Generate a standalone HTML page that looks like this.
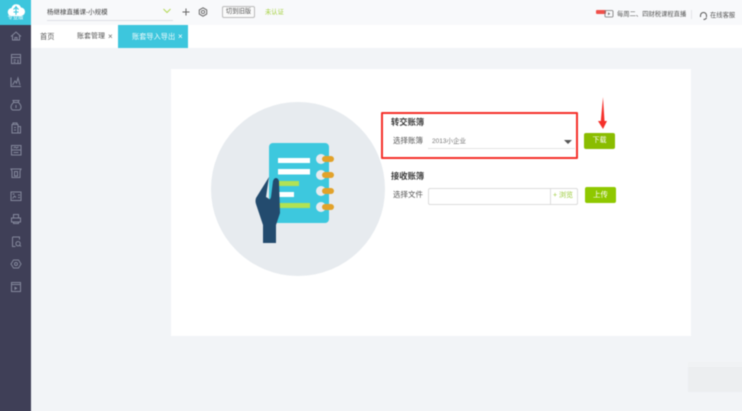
<!DOCTYPE html>
<html lang="zh">
<head>
<meta charset="utf-8">
<title>账套导入导出</title>
<style>
html,body{margin:0;padding:0;width:742px;height:411px;overflow:hidden}
body{background:#f2f4f7;position:relative;font-family:"Liberation Sans","Noto Sans CJK SC",sans-serif;color:#444}
.t{position:absolute;white-space:nowrap;line-height:10px}
.a{position:absolute}
#clip{position:absolute;left:0;top:0;width:742px;height:411px;overflow:hidden;contain:paint}
#wrap{position:absolute;left:0;top:0;width:742px;height:411px;filter:blur(.4px)}
</style>
</head>
<body>
<div id="clip">
<div id="wrap">
<!-- page background, extended past the edges so the blur does not fade -->
<div class="a" style="left:-6px;top:-6px;width:754px;height:423px;background:#f2f4f7"></div>
<!-- top bar -->
<div class="a" style="left:31px;top:-6px;width:717px;height:31px;background:#f8f9fb"></div>
<div class="a" style="left:47px;top:20px;width:126px;height:1px;background:#dfe0e6"></div>
<div class="t" style="left:47px;top:8px;font-size:6.500px;color:#444">杨继棣直播课-小规模</div>
<svg class="a" style="left:162px;top:8px" width="10" height="7" viewBox="0 0 10 7"><path d="M1.500 1L5 4.500 8.500 1" fill="none" stroke="#b5d95a" stroke-width="1.100"/></svg>
<svg class="a" style="left:181px;top:7px" width="10" height="10" viewBox="0 0 10 10"><path d="M5 1.500v7M1.500 5h7" stroke="#666" stroke-width="1"/></svg>
<svg class="a" style="left:198px;top:7px" width="10" height="10" viewBox="0 0 10 10"><path d="M5 .8l3.700 2.100v4.200L5 9.200 1.300 7.100V2.900z" fill="none" stroke="#666" stroke-width="1"/><circle cx="5" cy="5" r="1.600" fill="none" stroke="#666" stroke-width=".9"/></svg>
<div class="t" style="left:222px;top:6px;width:31px;height:10px;border:1px solid #bbb;border-radius:2px;font-size:6.300px;line-height:10px;text-align:center;color:#555;background:#fafafa">切到旧版</div>
<div class="t" style="left:265px;top:8px;font-size:6.300px;color:#a5d13f">未认证</div>
<div class="a" style="left:596px;top:10px;width:10px;height:4px;background:#f0504a;border-radius:1px"></div>
<svg class="a" style="left:604px;top:9px" width="10" height="9" viewBox="0 0 10 9"><rect x="1" y="1.500" width="8" height="6.500" rx="1" fill="none" stroke="#777" stroke-width=".8"/><path d="M4 3.200l2.300 1.500L4 6.200z" fill="#777"/></svg>
<div class="t" style="left:617px;top:10px;font-size:6.300px;color:#555">每周二、四财税课程直播</div>
<div class="a" style="left:691px;top:10px;width:1px;height:9px;background:#e4e5e9"></div>
<svg class="a" style="left:699px;top:11px" width="9" height="10" viewBox="0 0 9 10"><path d="M1.500 6V4.500a3 3 0 0 1 6 0V6M7.500 6.500Q7 8.500 4.500 8.500" fill="none" stroke="#555" stroke-width="1"/></svg>
<div class="t" style="left:710px;top:11px;font-size:6.300px;color:#555">在线客服</div>

<!-- tabs -->
<div class="a" style="left:31px;top:25px;width:717px;height:23px;background:#fff"></div>
<div class="t" style="left:40px;top:32px;font-size:7.200px;color:#555">首页</div>
<div class="t" style="left:77px;top:32px;font-size:7px;color:#555">账套管理</div>
<div class="t" style="left:108px;top:32px;font-size:8px;color:#666">×</div>
<div class="a" style="left:118px;top:25px;width:70px;height:23px;background:#3dc6dd"></div>
<div class="t" style="left:132px;top:32px;font-size:7.200px;color:#eefbfd">账套导入导出</div>
<div class="t" style="left:178px;top:32px;font-size:8px;color:#fff">×</div>

<!-- sidebar -->
<div class="a" style="left:-6px;top:-6px;width:37px;height:423px;background:#3f3f57"></div>
<div class="a" style="left:-6px;top:-6px;width:37px;height:31px;background:#3dc6dd"></div>
<svg class="a" style="left:7px;top:3px" width="18" height="14" viewBox="0 0 18 14"><path d="M5 13a4 4 0 0 1-.5-8 5 5 0 0 1 9.500-.5 4.200 4.200 0 0 1-.5 8.500z" fill="#fff"/><path d="M9 3v9M6.500 6.500L9 4l2.500 2.500M6.500 9h5" stroke="#3dc6dd" stroke-width="1.100" fill="none"/></svg>
<div class="t" style="left:0;top:15px;width:31px;text-align:center;font-size:5.300px;line-height:7px;color:#fff">专业版</div>
<svg class="a" style="left:0;top:0" width="31" height="300" viewBox="0 0 31 300" fill="none" stroke="#83879b" stroke-width="1">
  <g transform="translate(16 36)"><path d="M-5 .5L0-4l5 4.500M-3.500-.5V4h7V-.5M-1 4V1.500h2V4"/></g>
  <g transform="translate(16 59)"><path d="M-4.500-4.500h9v9h-9zM-4.500-1.500h9M-2.500 1h2.500M2 .5v4M-2.500 3h2"/></g>
  <g transform="translate(16 82)"><path d="M-5-4.500V4.500h10M-3.500 3l2.500-4 1.500 2 1.500-5 2 7"/></g>
  <g transform="translate(16 105)"><path d="M-2-2.500l-1-2h6l-1 2M-2.500-2.500h5q2.500 2.500 2.500 4.500T3.500 5h-7Q-5 4-5 2t2.500-4.500zM0 0v3"/></g>
  <g transform="translate(16 128)"><path d="M-3-3.500V-5h4v1.500M-4-3.500h6V5h-6zM2-1.500h2.500V5H2M-2-.5h2M-2 2h2"/></g>
  <g transform="translate(16 150)"><path d="M-4.500-4.500h9.500v9.500h-9.500zM-4.500 0h9.500M-2.500-2l1.500-1 1.500 1 2-1M-2.500 2.500h5"/></g>
  <g transform="translate(16 173)"><path d="M-5-4h10L4-2v6.500h-8V-2zM-1.500-1.500h3V3h-3z"/></g>
  <g transform="translate(16 196)"><path d="M-5-4h10v8.500H-5zM-3.500 2.500l2-2.500 1.500 1.500M2-1h2M2 1.500h2M-3.500-2h2"/></g>
  <g transform="translate(16 219)"><path d="M-2.500-1v-3.500h5V-1M-4.500-1h9v4h-9zM-2.500 3v1.500h5V3"/></g>
  <g transform="translate(16 242)"><path d="M-3.500-5h7v2.500M-3.500-5V4.500h3M2-.5a2.200 2.200 0 1 0 .1 0M4 3.500l1 1"/></g>
  <g transform="translate(16 264)"><path d="M-2.500-4l-2.500 4 2.500 4h5L5 0 2.500-4z"/><circle cx="0" cy="0" r="1.500"/></g>
  <g transform="translate(16 287)"><path d="M-4.500-4.500h9v9h-9zM-4.500-2.500h9"/><path d="M-1.500-.5l3 1.800-3 1.800z" fill="#83879b" stroke="none"/></g>
</svg>

<!-- card -->
<div class="a" style="left:171px;top:69px;width:520px;height:267px;background:#fff"></div>

<!-- illustration -->
<svg class="a" style="left:200px;top:100px" width="190" height="180" viewBox="0 0 190 180">
  <circle cx="98" cy="89" r="87" fill="#e7ebef"/>
  <rect x="69" y="43" width="60" height="80" rx="4" fill="#3dc8de"/>
  <rect x="78" y="58" width="32" height="5" fill="#fff"/>
  <rect x="78" y="69" width="32" height="5.500" fill="#fff"/>
  <rect x="78" y="81" width="21" height="5" fill="#b1e254"/>
  <rect x="78" y="92" width="16" height="5" fill="#fff"/>
  <rect x="78" y="103" width="32" height="5" fill="#b1e254"/>
  <g fill="#e7ebef"><circle cx="121" cy="59" r="5"/><circle cx="121" cy="75" r="5"/><circle cx="121" cy="91" r="5"/><circle cx="121" cy="107" r="5"/></g>
  <g fill="#e2a22a"><rect x="122" y="56" width="12" height="6" rx="3"/><rect x="122" y="72" width="12" height="6" rx="3"/><rect x="122" y="88" width="12" height="6" rx="3"/><rect x="122" y="104" width="12" height="6" rx="3"/></g>
  <path d="M69 77L56 98q-1 3 0 6l7 21v18h13v-18l4-12-1-32q-1-3-3-3t-3 3l-2 16q-1 3-2 2t-3-2z" fill="#234b6e"/>
</svg>

<!-- red highlight -->
<div class="a" style="left:381px;top:112px;width:193px;height:43px;border:2px solid #f5302a;border-radius:1px"></div>
<div class="t" style="left:391px;top:117px;font-size:8.300px;color:#3a3a3a;font-weight:bold">转交账簿</div>
<div class="t" style="left:393px;top:136px;font-size:7.500px;color:#555">选择账簿</div>
<div class="t" style="left:432px;top:137px;font-size:6.500px;color:#777">2013小企业</div>
<div class="a" style="left:428px;top:148px;width:147px;height:1px;background:#e3e3e3"></div>
<div class="a" style="left:564px;top:140px;width:0;height:0;border-left:4px solid transparent;border-right:4px solid transparent;border-top:4px solid #555"></div>
<div class="t" style="left:584px;top:133px;width:31px;height:16px;line-height:16px;background:#8abd00;border-radius:2px;color:#fff;font-size:7px;text-align:center">下载</div>

<!-- arrow -->
<svg class="a" style="left:595px;top:95px" width="14" height="36" viewBox="0 0 14 36"><path d="M8 2L5.800 26H3l5 8 4-8H9.500z" fill="#f5302a"/></svg>

<!-- receive -->
<div class="t" style="left:391px;top:171px;font-size:8.300px;color:#3a3a3a;font-weight:bold">接收账簿</div>
<div class="t" style="left:393px;top:190px;font-size:7.500px;color:#555">选择文件</div>
<div class="a" style="left:428px;top:188px;width:148px;height:15px;border:1px solid #dcdcdc;border-radius:2px;background:#fff"></div>
<div class="a" style="left:550px;top:188px;width:1px;height:16px;background:#dcdcdc"></div>
<div class="t" style="left:553px;top:191px;font-size:7px;color:#9ccb3a">+ 浏览</div>
<div class="t" style="left:585px;top:187px;width:31px;height:16px;line-height:16px;background:#8fc800;border-radius:2px;color:#fff;font-size:7.500px;text-align:center">上传</div>

<!-- blurred watermark -->
<div class="a" style="left:688px;top:367px;width:60px;height:25px;background:#eceef0"></div>
<div class="a" style="left:688px;top:362px;width:60px;height:5px;background:#f0f2f4"></div>
</div>
</div>
</body>
</html>
